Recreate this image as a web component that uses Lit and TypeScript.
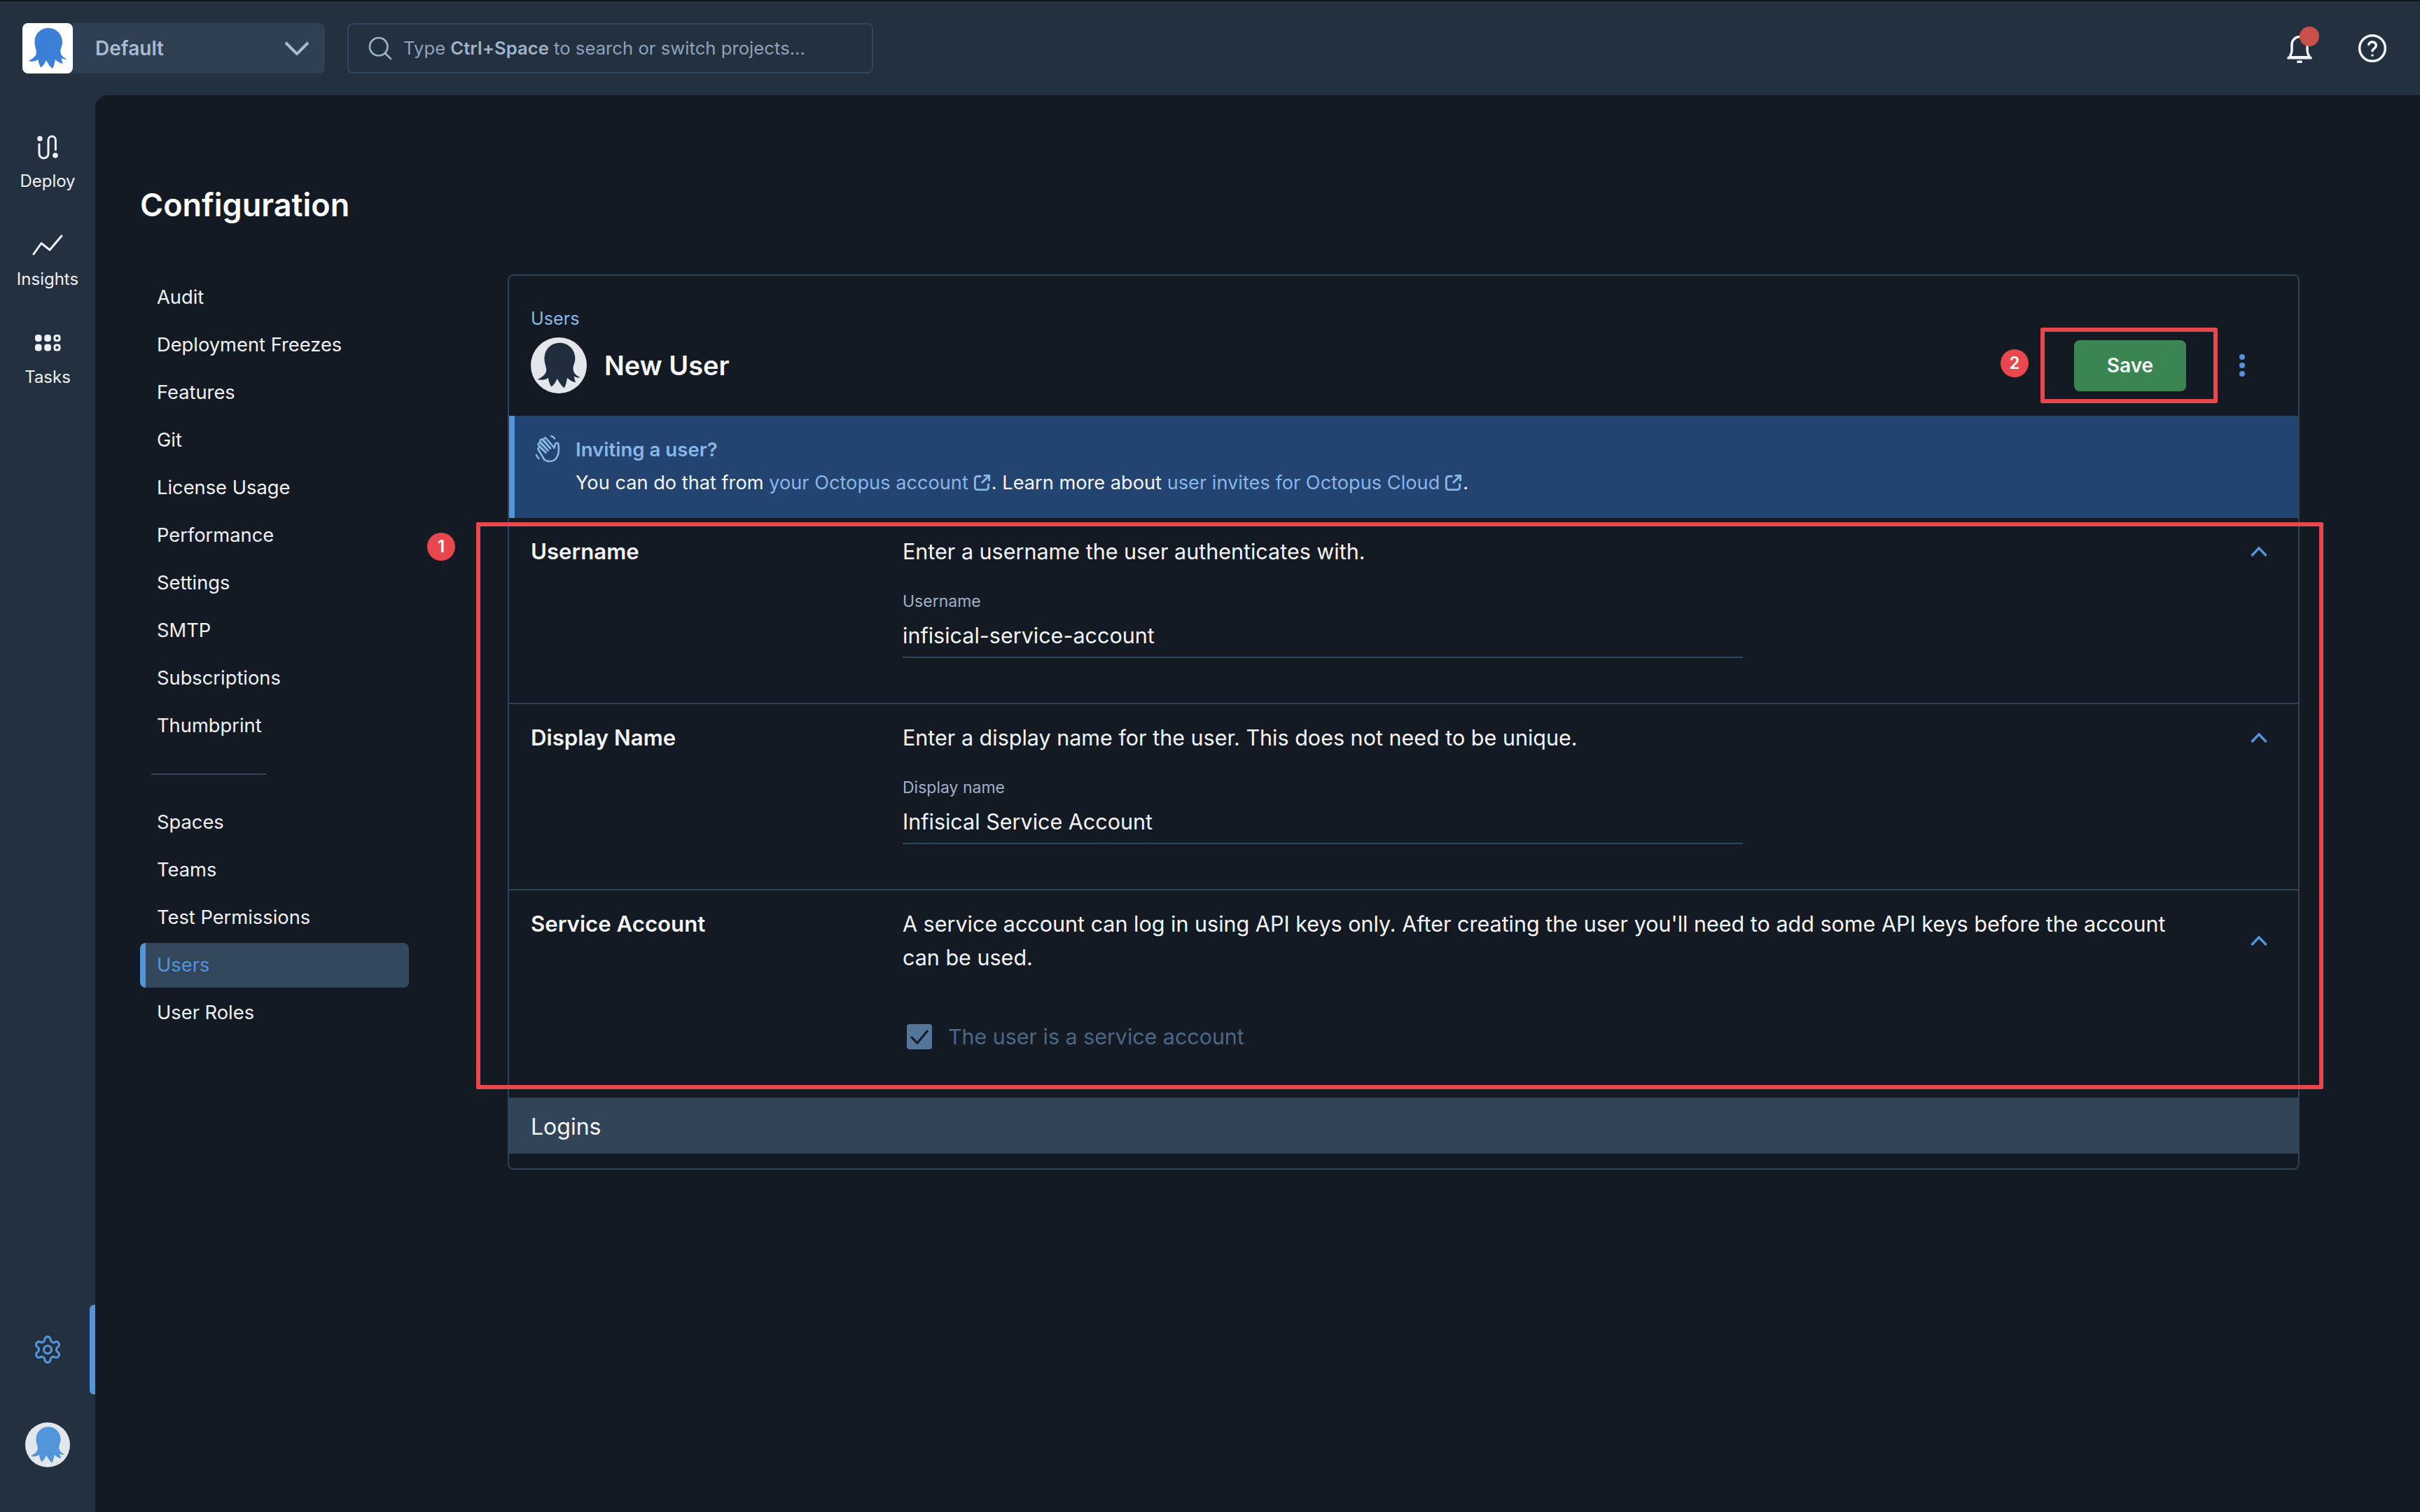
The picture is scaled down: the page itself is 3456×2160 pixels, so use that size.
import { LitElement, html, css } from "lit";
import { customElement } from "lit/decorators.js";

const octo = (cls: string) => html`<svg class=${cls} viewBox="0 0 72 72"><path d="M37 7C26 7 17.5 15.5 17.5 27C17.5 33 19.5 37 20 41C20.5 46 16 50.5 8.5 54C14 55.5 19 54.5 22.5 52C23 56 24 60 26.5 63.5C30 61 32 57 34 53C36 57 39 62 43 65C45.5 61 46 56 47 52C50 55 53 57 57.5 58C57 55 56 53 55.5 50C58 51.5 60.5 52 63.5 51.5C58 49 55 46 54.5 41C54 36 57 33 57 27C57 15.5 48 7 37 7Z"/></svg>`;

const extLink = html`<svg class="ext" viewBox="0 0 24 24"><path d="M11 4H6a3 3 0 0 0-3 3v11a3 3 0 0 0 3 3h11a3 3 0 0 0 3-3v-5M14 3h7v7M21 3l-9.5 9.5"/></svg>`;

const chevUp = html`<svg class="chev" viewBox="0 0 24 16"><path d="M1.5 14L12 3L22.5 14"/></svg>`;

const topNav = ["Audit", "Deployment Freezes", "Features", "Git", "License Usage", "Performance", "Settings", "SMTP", "Subscriptions", "Thumbprint"];
const bottomNav = ["Spaces", "Teams", "Test Permissions", "Users", "User Roles"];

@customElement("app-root")
export class AppRoot extends LitElement {
  static styles = css`
    :host { display: block; position: relative; width: 3456px; height: 2160px; overflow: hidden; background: #223040; color: #f3f5f8; font-family: Inter, "Noto Sans", sans-serif; font-size: 28px; line-height: 48px; }
    * { box-sizing: border-box; }
    svg { display: block; flex: none; }

    .top { height: 136px; display: flex; align-items: center; padding: 0 46px 0 32px; border-top: 2px solid #10161e; background: #223040; }
    .logo { width: 72px; height: 72px; background: #fff; border-radius: 8px; flex: none; position: relative; }
    .logo-svg { width: 72px; height: 72px; fill: #3b7fd6; }
    .project { width: 360px; height: 72px; margin-left: 0; background: #2f3f54; border-radius: 0 8px 8px 0; display: flex; align-items: center; justify-content: space-between; padding: 0 22px 0 32px; color: #a9bbcd; font-weight: 600; font-size: 28px; }
    .project svg { width: 36px; height: 20px; fill: none; stroke: #a9bbcd; stroke-width: 4; }
    .search { width: 751px; height: 72px; margin-left: 32px; border: 2px solid #2f4660; border-radius: 8px; display: flex; align-items: center; padding-left: 27px; gap: 15px; color: #8ea3b8; font-size: 25.7px; }
    .search svg { width: 36px; height: 36px; fill: none; stroke: #a0b2c6; stroke-width: 1.8; }
    .search b { font-weight: 600; color: #a0b2c6; }
    .spacer { flex: 1; }
    .bell { position: relative; width: 44px; height: 48px; margin-right: 60px; }
    .bell svg { width: 44px; height: 48px; fill: none; stroke: #f3f5f8; stroke-width: 1.9; }
    .bell i { position: absolute; width: 28px; height: 28px; border-radius: 50%; background: #c94f48; left: 22px; top: -7px; }
    .help { width: 44px; height: 44px; fill: none; stroke: #f3f5f8; stroke-width: 1.9; stroke-linecap: round; }

    .below { display: flex; height: 2024px; }
    .rail { width: 136px; flex: none; display: flex; flex-direction: column; align-items: center; padding: 54px 0 64px; }
    .rail-item { height: 85px; margin-bottom: 55px; display: flex; flex-direction: column; align-items: center; width: 100%; font-size: 24px; line-height: 32px; color: #eef1f5; }
    .rail-icon { height: 40px; margin-bottom: 13px; display: flex; align-items: center; justify-content: center; }
    .rail-icon .stroke { fill: none; stroke: #eef1f5; stroke-width: 3; stroke-linecap: round; stroke-linejoin: round; }
    .rail-icon .fill { fill: #eef1f5; }
    .rail-icon .hollow { fill: none; stroke: #eef1f5; stroke-width: 3; }
    .settings { margin-top: auto; width: 100%; height: 128px; position: relative; display: flex; align-items: center; justify-content: center; }
    .settings svg { width: 44px; height: 44px; fill: none; stroke: #5295db; stroke-width: 1.7; stroke-linecap: round; stroke-linejoin: round; }
    .settings i { position: absolute; right: 0; top: 0; width: 8px; height: 128px; background: #5295db; border-radius: 6px 0 0 6px; }
    .rail-avatar { width: 64px; height: 64px; margin-top: 40px; border-radius: 50%; background: #e3e6ea; flex: none; display: flex; align-items: center; justify-content: center; }
    .rail-avatar svg { width: 64px; height: 64px; fill: #5295db; }

    .main { flex: 1; background: #131a23; border-radius: 18px 0 0 0; padding: 125px 172px 0 64px; min-width: 0; }
    h1 { margin: 0; font-size: 45px; line-height: 64px; font-weight: 600; color: #fff; }
    .columns { display: flex; margin-top: 66px; }
    .nav { width: 384px; flex: none; margin-right: 141px; display: flex; flex-direction: column; gap: 4px; font-size: 27.3px; }
    .nav-item { height: 64px; border-left: 8px solid transparent; padding-left: 16px; line-height: 63px; border-radius: 8px; color: #eef1f5; }
    .nav-item.upper { line-height: 67px; }
    .nav-item.active { background: #33475c; border-left-color: #5295db; color: #5295db; }
    .nav hr { width: 164px; height: 2px; border: 0; margin: 34px 0 32px 16px; background: #2f4660; flex: none; }

    .card { flex: 1; height: 1279px; margin-top: 1px; border: 2px solid #2d4157; border-radius: 8px; min-width: 0; position: relative; }
    .card-head { height: 200px; padding: 49px 76px 0 31px; }
    .crumb { font-size: 25.2px; line-height: 24px; color: #87b7e6; }
    .head-row { display: flex; align-items: center; margin-top: 15px; height: 80px; }
    .avatar { width: 80px; height: 80px; border-radius: 50%; background: #e3e6ea; flex: none; }
    .avatar svg { width: 80px; height: 80px; fill: #1f2d3d; }
    .head-row h2 { margin: 0 0 0 25px; font-size: 38px; font-weight: 600; color: #f5f7fa; line-height: 56px; flex: 1; }
    .save { width: 160px; height: 73px; background: #3b8552; border-radius: 8px; display: flex; align-items: center; justify-content: center; font-weight: 600; margin-right: 76px; color: #f7f9fa; }
    .dots { display: flex; flex-direction: column; gap: 4px; width: 8px; }
    .dots i { width: 8px; height: 8px; border-radius: 50%; background: #5295db; }

    .banner { height: 146px; background: #234370; border-left: 8px solid #5295db; padding: 24px 0 0 28px; display: flex; gap: 21px; font-size: 27.2px; }
    .hand { width: 38px; height: 40px; margin-top: 3px; fill: none; stroke: #87b7e6; stroke-width: 2.6; stroke-linecap: round; stroke-linejoin: round; }
    .banner-title { font-weight: 600; color: #87b7e6; font-size: 27.6px; }
    .banner a { color: #87b7e6; text-decoration: none; }
    .ext { display: inline-block; width: 27px; height: 27px; fill: none; stroke: #87b7e6; stroke-width: 2.6; margin: 0 0 -4px 6px; }

    .section { display: grid; grid-template-columns: 531px 1fr 24px; column-gap: 0; padding: 24px 44px 64px 31px; border-bottom: 2px solid #2d4157; font-size: 30.5px; }
    .section .title { grid-column: 1; grid-row: 1; font-weight: 600; font-size: 31.2px; }
    .section .desc { grid-column: 2; grid-row: 1; padding-right: 96px; }
    .section .chev { grid-column: 3; grid-row: 1; align-self: center; justify-self: center; width: 24px; height: 16px; fill: none; stroke: #5295db; stroke-width: 3.4; }
    .section .field { grid-column: 2; grid-row: 2; width: 1200px; margin-top: 31px; }
    .field label { display: block; font-size: 23px; line-height: 32px; color: #9fb2c6; }
    .field .value { margin-top: 9px; padding-bottom: 6px; border-bottom: 2px solid #2f4660; }
    .section.last { border-bottom: 0; padding-bottom: 63px; }
    .check { grid-column: 2; grid-row: 2; margin-top: 65px; display: flex; align-items: center; padding-left: 6px; color: #4a6787; gap: 23px; font-size: 30.4px; }
    .box { width: 36px; height: 36px; border-radius: 4px; background: #54769a; flex: none; }
    .box svg { width: 36px; height: 36px; fill: none; stroke: #131a23; stroke-width: 3; }

    .logins { height: 80px; background: #324558; padding-left: 31px; line-height: 84px; font-size: 32px; color: #f3f5f8; }

    .mark { position: absolute; border: 6px solid #e8474d; border-radius: 2px; }
    .mark-form { left: 680px; top: 746px; width: 2638px; height: 810px; }
    .mark-save { left: 2914px; top: 468px; width: 253px; height: 108px; }
    .num { position: absolute; width: 40px; height: 40px; border-radius: 50%; background: #e8474d; color: #fff; font-size: 24px; line-height: 40px; text-align: center; font-weight: 600; }
    .num-1 { left: 610px; top: 761px; }
    .num-2 { left: 2857px; top: 499px; }
  `;

  render() {
    return html`
      <div class="top">
        <div class="logo">${octo("logo-svg")}</div>
        <div class="project">Default
          <svg viewBox="0 0 36 20"><path d="M2 2L18 18L34 2"/></svg>
        </div>
        <div class="search">
          <svg viewBox="0 0 24 24"><circle cx="10.5" cy="10.5" r="8.5"/><path d="M17 17L22.5 22.5"/></svg>
          <span>Type <b>Ctrl+Space</b> to search or switch projects...</span>
        </div>
        <div class="spacer"></div>
        <div class="bell">
          <svg viewBox="0 0 24 26"><path d="M4 20c1.300-1.600 2-3 2-6V10a6 6 0 0 1 12 0v4c0 3 .7 4.400 2 6zM2.500 20.500h19"/><path d="M10 23.500h4"/></svg>
          <i></i>
        </div>
        <svg class="help" viewBox="0 0 24 24"><circle cx="12" cy="12" r="10"/><path d="M9.100 9a3 3 0 0 1 5.800 1c0 2-2.900 2.600-2.900 4"/><path d="M12 17.500h.01"/></svg>
      </div>
      <div class="below">
        <div class="rail">
          <div class="rail-item">
            <div class="rail-icon"><svg width="40" height="40" viewBox="0 0 40 40"><circle class="fill" cx="9" cy="8" r="3.800"/><circle class="fill" cx="31" cy="32" r="3.800"/><path class="stroke" d="M8 16V29.500a6.500 6.500 0 0 0 13 0V10a5.200 5.200 0 0 1 10.400 0V24"/></svg></div>
            Deploy
          </div>
          <div class="rail-item">
            <div class="rail-icon"><svg width="48" height="36" viewBox="0 0 48 36"><path class="stroke" d="M4 31L15 15.500L27 25L44 5"/></svg></div>
            Insights
          </div>
          <div class="rail-item">
            <div class="rail-icon"><svg width="38" height="26" viewBox="0 0 38 26"><rect class="fill" x="1" y="1" width="9.600" height="10" rx="4"/><rect class="fill" x="14.300" y="1" width="9.600" height="10" rx="4"/><rect class="hollow" x="29" y="2.500" width="7" height="7" rx="2.500"/><rect class="fill" x="1" y="14.500" width="9.600" height="10" rx="4"/><rect class="fill" x="14.300" y="14.500" width="9.600" height="10" rx="4"/><rect class="hollow" x="29" y="16" width="7" height="7" rx="2.500"/></svg></div>
            Tasks
          </div>
          <div class="settings">
            <svg viewBox="0 0 24 24"><path d="M12.220 2h-.44a2 2 0 0 0-2 2v.18a2 2 0 0 1-1 1.730l-.43.25a2 2 0 0 1-2 0l-.15-.08a2 2 0 0 0-2.730.73l-.22.38a2 2 0 0 0 .73 2.730l.15.1a2 2 0 0 1 1 1.720v.51a2 2 0 0 1-1 1.740l-.15.09a2 2 0 0 0-.73 2.730l.22.38a2 2 0 0 0 2.730.73l.15-.08a2 2 0 0 1 2 0l.43.25a2 2 0 0 1 1 1.730V20a2 2 0 0 0 2 2h.44a2 2 0 0 0 2-2v-.18a2 2 0 0 1 1-1.730l.43-.25a2 2 0 0 1 2 0l.15.08a2 2 0 0 0 2.730-.73l.22-.39a2 2 0 0 0-.73-2.730l-.15-.08a2 2 0 0 1-1-1.740v-.5a2 2 0 0 1 1-1.740l.15-.09a2 2 0 0 0 .73-2.730l-.22-.38a2 2 0 0 0-2.730-.73l-.15.08a2 2 0 0 1-2 0l-.43-.25a2 2 0 0 1-1-1.730V4a2 2 0 0 0-2-2z"/><circle cx="12" cy="12" r="3"/></svg>
            <i></i>
          </div>
          <div class="rail-avatar">${octo("")}</div>
        </div>
        <div class="main">
          <h1>Configuration</h1>
          <div class="columns">
            <nav class="nav">
              ${topNav.map((n) => html`<div class="nav-item upper">${n}</div>`)}
              <hr />
              ${bottomNav.map((n) => html`<div class="nav-item ${n === "Users" ? "active" : ""}">${n}</div>`)}
            </nav>
            <section class="card">
              <div class="card-head">
                <div class="crumb">Users</div>
                <div class="head-row">
                  <div class="avatar">${octo("")}</div>
                  <h2>New User</h2>
                  <div class="save">Save</div>
                  <div class="dots"><i></i><i></i><i></i></div>
                </div>
              </div>
              <div class="banner">
                <svg class="hand" viewBox="0 0 38 40"><path d="M14 35.500c5 3.500 13 3.500 17-1.500 4-5 4.500-13 3.500-20-.5-3-3.500-3-4.500-.5l-1.500 5.500"/><path d="M28.500 18.500L17 5.500c-2-2-4.800.5-3 3l9 11"/><path d="M23 19.500L12 7.500c-2-2-5 .5-3 3l10.500 12"/><path d="M19.500 22.500L9.500 12.500c-2-2-5 .5-3 3l10 10"/><path d="M16.500 25.500L9 18.500c-2-1.500-4.500 1-3 3l8 13.500"/><path d="M3 29c.5 1.800 1.800 3.500 3.500 5M24 2c2 .3 3.800 1.500 5 3.500"/></svg>
                <div>
                  <div class="banner-title">Inviting a user?</div>
                  <div>You can do that from <a>your Octopus account${extLink}</a>. Learn more about <a>user invites for Octopus Cloud${extLink}</a>.</div>
                </div>
              </div>
              <div class="section">
                <div class="title">Username</div>
                <div class="desc">Enter a username the user authenticates with.</div>
                ${chevUp}
                <div class="field"><label>Username</label><div class="value">infisical-service-account</div></div>
              </div>
              <div class="section">
                <div class="title">Display Name</div>
                <div class="desc">Enter a display name for the user. This does not need to be unique.</div>
                ${chevUp}
                <div class="field"><label>Display name</label><div class="value">Infisical Service Account</div></div>
              </div>
              <div class="section last">
                <div class="title">Service Account</div>
                <div class="desc">A service account can log in using API keys only. After creating the user you'll need to add some API keys before the account can be used.</div>
                ${chevUp}
                <div class="check">
                  <div class="box"><svg viewBox="0 0 36 36"><path d="M6 18L15 27L30 9"/></svg></div>
                  The user is a service account
                </div>
              </div>
              <div class="logins">Logins</div>
            </section>
          </div>
        </div>
      </div>
      <div class="mark mark-form"></div>
      <div class="mark mark-save"></div>
      <div class="num num-1">1</div>
      <div class="num num-2">2</div>
    `;
  }
}
